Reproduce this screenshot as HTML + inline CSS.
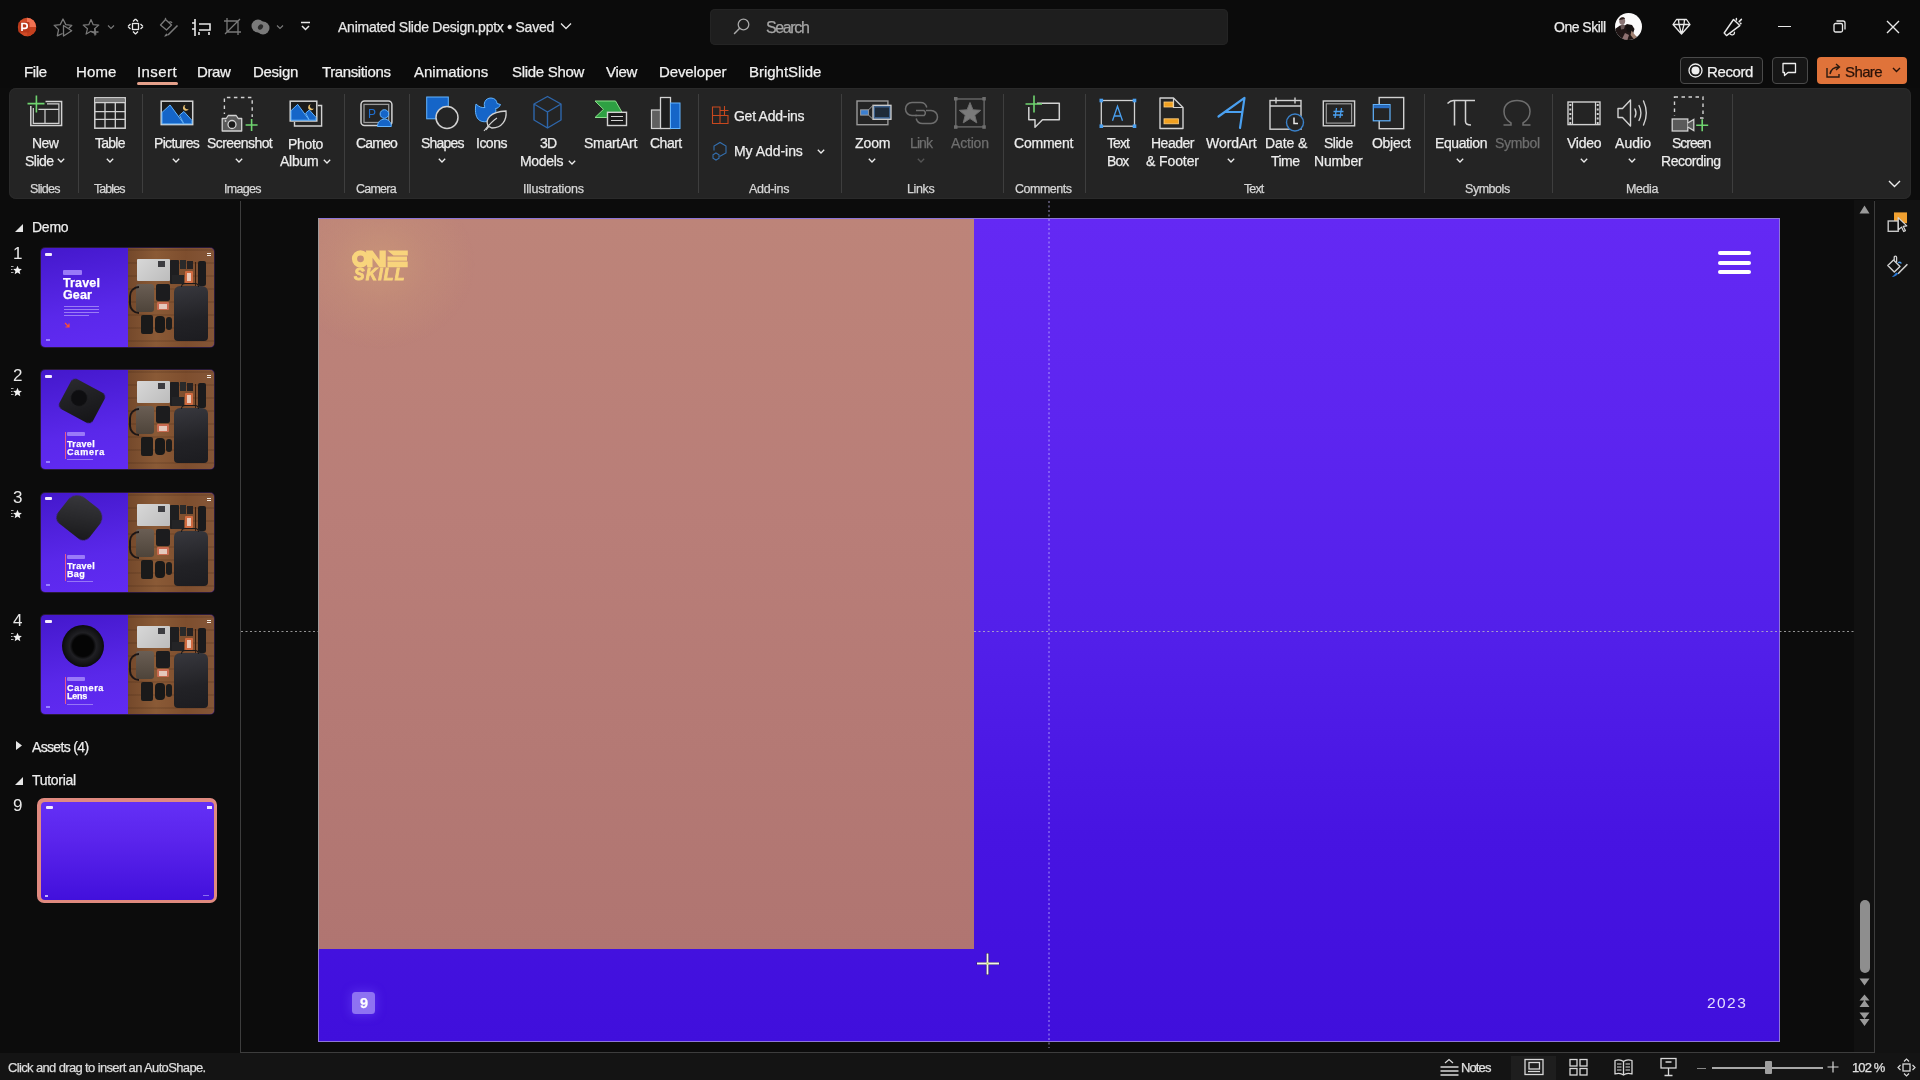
<!DOCTYPE html>
<html><head><meta charset="utf-8"><title>PowerPoint</title>
<style>
html,body{margin:0;padding:0;width:1920px;height:1080px;overflow:hidden;background:#0b0b0b;font-family:"Liberation Sans", sans-serif;}
#root{position:relative;width:1920px;height:1080px;overflow:hidden;}
#root>div{will-change:transform;-webkit-text-stroke:0.25px currentColor}
svg{display:block}
</style></head><body><div id="root">
<div style="position:absolute;left:0px;top:0px;width:1920px;height:88px;background:#0b0b0b"></div>
<div style="position:absolute;left:0px;top:88px;width:1920px;height:965px;background:#0c0c0c"></div>
<div style="position:absolute;left:9px;top:88px;width:1902px;height:111px;background:#242424;border-radius:7px;box-shadow:inset 0 0 0 1px #2a2a2a"></div>
<div style="position:absolute;left:1854px;top:200px;width:20px;height:852px;background:#111111"></div>
<div style="position:absolute;left:1875px;top:200px;width:45px;height:853px;background:#121212"></div>
<div style="position:absolute;left:240px;top:201px;width:1px;height:852px;background:#3d3d3d"></div>
<div style="position:absolute;left:241px;top:1052px;width:1634px;height:1px;background:#3d3d3d"></div>
<div style="position:absolute;left:1874px;top:201px;width:1px;height:852px;background:#3d3d3d"></div>
<div style="position:absolute;left:0px;top:1053px;width:1920px;height:27px;background:#141414"></div>
<svg style="position:absolute;left:16px;top:16px;overflow:visible;" width="22" height="22" viewBox="0 0 22 22" fill="none"><circle cx="11" cy="11" r="9.2" fill="#d04a26"/><path d="M11 1.8a9.2 9.2 0 0 1 9.2 9.2H11z" fill="#f27252"/><path d="M20.2 11a9.2 9.2 0 0 1-9.2 9.2V11z" fill="#c4401e"/><rect x="2.5" y="6" width="11" height="10.5" rx="1" fill="#b8381a"/><path d="M6 15V7.5h2.8a2.4 2.4 0 0 1 0 4.8H6" stroke="#fff" stroke-width="1.7" fill="none"/></svg>
<svg style="position:absolute;left:53px;top:18px;overflow:visible;" width="20" height="19" viewBox="0 0 20 19" fill="none"><path d="M9.5 15.5L4.3 17.8l1.3-6.2L1.2 7.3l6-.7L10 1l2.8 5.6 6 .7-3 3" stroke="#7a7a7a" stroke-width="1.3" stroke-linejoin="round"/><path d="M10.5 7.5v10.5l8.2-5.3z" stroke="#7a7a7a" stroke-width="1.3" stroke-linejoin="round"/></svg>
<svg style="position:absolute;left:82px;top:18px;overflow:visible;" width="18" height="18" viewBox="0 0 18 18" fill="none"><path d="M9 1.5l2.2 5.2 5.6.4-4.3 3.6 1.4 5.4L9 13.2 4.1 16.1l1.4-5.4L1.2 7.1l5.6-.4z" stroke="#7a7a7a" stroke-width="1.2" stroke-linejoin="round"/><path d="M13 10.5v7M9.5 14h7" stroke="#7a7a7a" stroke-width="1.4"/></svg>
<svg style="position:absolute;left:107px;top:24px;overflow:visible;" width="8" height="6" viewBox="0 0 8 6" fill="none"><path d="M1 1.5l3 3 3-3" stroke="#7a7a7a" stroke-width="1.1"/></svg>
<svg style="position:absolute;left:127px;top:18px;overflow:visible;" width="17" height="17" viewBox="0 0 17 17" fill="none"><path d="M8.5 1l-2.5 2.5M8.5 1l2.5 2.5M8.5 16l-2.5-2.5M8.5 16l2.5-2.5M1 8.5l2.5-2.5M1 8.5l2.5 2.5M16 8.5l-2.5-2.5M16 8.5l-2.5 2.5" stroke="#e8e8e8" stroke-width="1.3"/><rect x="5.5" y="5.5" width="6" height="6" stroke="#e8e8e8" stroke-width="1.3"/></svg>
<svg style="position:absolute;left:159px;top:17px;overflow:visible;" width="20" height="20" viewBox="0 0 20 20" fill="none"><path d="M1.5 8l5-5.5 6 5.5-5 5z" stroke="#7a7a7a" stroke-width="1.3" stroke-linejoin="round"/><path d="M6.5 2.5V0.8" stroke="#7a7a7a" stroke-width="1.3"/><path d="M10 5.5c1-1 2.5-.8 3 .5" stroke="#7a7a7a" stroke-width="1.2"/><path d="M18.5 8.5L9 18" stroke="#7a7a7a" stroke-width="1.6"/><path d="M9 18c-1 1-2.5 1.5-4 1.5 1-1 1.5-2.5 2.8-3z" fill="#7a7a7a"/></svg>
<svg style="position:absolute;left:191px;top:18px;overflow:visible;" width="20" height="18" viewBox="0 0 20 18" fill="none"><path d="M4 1v17M1 5h3M1 11h3M8 6h11v6H8M8 14v3M18 14v3" stroke="#e8e8e8" stroke-width="1.6"/></svg>
<svg style="position:absolute;left:223px;top:17px;overflow:visible;" width="19" height="19" viewBox="0 0 19 19" fill="none"><path d="M4 1v14h14M1 4h14v14M2 17L17 2" stroke="#7a7a7a" stroke-width="1.3"/></svg>
<svg style="position:absolute;left:251px;top:18px;overflow:visible;" width="19" height="18" viewBox="0 0 19 18" fill="none"><circle cx="7" cy="8" r="6.5" fill="#7a7a7a"/><circle cx="12" cy="10" r="6.5" fill="#7a7a7a"/><ellipse cx="9.5" cy="9" rx="2.2" ry="3" fill="#2a2a2a" transform="rotate(40 9.5 9)"/></svg>
<svg style="position:absolute;left:276px;top:24px;overflow:visible;" width="8" height="6" viewBox="0 0 8 6" fill="none"><path d="M1 1.5l3 3 3-3" stroke="#7a7a7a" stroke-width="1.1"/></svg>
<svg style="position:absolute;left:300px;top:21px;overflow:visible;" width="11" height="11" viewBox="0 0 11 11" fill="none"><path d="M1 1.5h9M2 5l3.5 3.5L9 5" stroke="#e8e8e8" stroke-width="1.5"/></svg>
<div style="position:absolute;left:338.40px;top:20.05px;font-size:14px;line-height:14px;letter-spacing:-0.246px;color:#e6e6e6;font-weight:400;white-space:nowrap;">Animated Slide Design.pptx • Saved</div>
<svg style="position:absolute;left:560px;top:22px;overflow:visible;" width="12" height="8" viewBox="0 0 12 8" fill="none"><path d="M1 1.5l5 5 5-5" stroke="#e6e6e6" stroke-width="1.3"/></svg>
<div style="position:absolute;left:710px;top:9px;width:518px;height:36px;background:#1e1e1e;border-radius:5px;box-shadow:inset 0 0 0 1px #242424"></div>
<svg style="position:absolute;left:732px;top:17px;overflow:visible;" width="18" height="19" viewBox="0 0 18 19" fill="none"><circle cx="11.5" cy="7.5" r="5.3" stroke="#a8a8a8" stroke-width="1.3"/><path d="M7.7 11.3L2.5 16.5" stroke="#a8a8a8" stroke-width="1.5" stroke-linecap="round"/></svg>
<div style="position:absolute;left:765.60px;top:19.66px;font-size:16px;line-height:16px;letter-spacing:-1.366px;color:#a6a6a6;font-weight:400;white-space:nowrap;">Search</div>
<div style="position:absolute;left:1553.50px;top:20.15px;font-size:14px;line-height:14px;letter-spacing:-0.502px;color:#eaeaea;font-weight:400;white-space:nowrap;">One Skill</div>
<div style="position:absolute;left:1615.4px;top:13.2px;width:27.2px;height:27.2px;border-radius:50%;overflow:hidden;background:#fbfafa"><svg width="28" height="28" viewBox="0 0 28 28" style="position:absolute;left:-0.4px;top:-0.2px"><path d="M0 16l5-3.5 4 .5 3-2 5 1 2.5 4-1.5 5 4 3 2 5H0z" fill="#1e1414"/><path d="M5.5 12c1.5-1 3.5-.8 4.5.5l-1 3.5-3 .5z" fill="#6a5858"/><ellipse cx="7.2" cy="8" rx="3" ry="3.6" fill="#8a7474"/><path d="M4.2 7c.5-3 4.5-3.5 6-1.2-1 0-2 .2-2.8.7z" fill="#2a1e1c"/><path d="M11 12.5l5.5-.5 2 4.5-2 3-4.5-1z" fill="#141010"/><path d="M16.5 17.5l3.5 4.5 2.5 4-3 1-4-5z" fill="#a08070"/><path d="M10 20l4 2-2 6H6z" fill="#8e7070"/></svg></div>
<svg style="position:absolute;left:1672px;top:18px;overflow:visible;" width="19" height="17" viewBox="0 0 19 17" fill="none"><path d="M4.5 1.5h10l3.5 5-8.5 9.5L1 6.5z M1 6.5h17M7 6.5l2.5 9.5 2.5-9.5M6.5 1.5L7 6.5M12.5 1.5L12 6.5" stroke="#e8e8e8" stroke-width="1.3" stroke-linejoin="round"/></svg>
<svg style="position:absolute;left:1720px;top:14px;overflow:visible;" width="24" height="26" viewBox="0 0 24 26" fill="none"><path d="M4.2 19L13.5 5.5L19.8 11.6L6.5 21.6Z" stroke="#e8e8e8" stroke-width="1.4" stroke-linejoin="round"/><path d="M10 19.5a2.3 2.3 0 0 0 4.3-1.8" stroke="#e8e8e8" stroke-width="1.3"/><path d="M16.4 4.6v1.5M19.2 7.6l2.2-2.2" stroke="#e8e8e8" stroke-width="1.5" stroke-linecap="round"/><circle cx="20.7" cy="9.6" r="1" fill="#e8e8e8"/></svg>
<div style="position:absolute;left:1778px;top:26px;width:13px;height:1.4px;background:#e8e8e8"></div>
<svg style="position:absolute;left:1833px;top:20px;overflow:visible;" width="13" height="13" viewBox="0 0 13 13" fill="none"><rect x="1" y="3.5" width="8.5" height="8.5" rx="1.5" stroke="#e8e8e8" stroke-width="1.3"/><path d="M3.5 1h6.5a2 2 0 0 1 2 2v6.5" stroke="#e8e8e8" stroke-width="1.3"/></svg>
<svg style="position:absolute;left:1886px;top:20px;overflow:visible;" width="14" height="14" viewBox="0 0 14 14" fill="none"><path d="M1 1l12 12M13 1L1 13" stroke="#e8e8e8" stroke-width="1.4"/></svg>
<div style="position:absolute;left:24.00px;top:64.30px;font-size:15px;line-height:15px;letter-spacing:-0.367px;color:#f0f0f0;font-weight:400;white-space:nowrap;">File</div>
<div style="position:absolute;left:75.50px;top:64.30px;font-size:15px;line-height:15px;letter-spacing:0.122px;color:#f0f0f0;font-weight:400;white-space:nowrap;">Home</div>
<div style="position:absolute;left:137.30px;top:64.30px;font-size:15px;line-height:15px;letter-spacing:0.414px;color:#f0f0f0;font-weight:400;white-space:nowrap;">Insert</div>
<div style="position:absolute;left:197.30px;top:64.30px;font-size:15px;line-height:15px;letter-spacing:-0.376px;color:#f0f0f0;font-weight:400;white-space:nowrap;">Draw</div>
<div style="position:absolute;left:252.70px;top:64.30px;font-size:15px;line-height:15px;letter-spacing:-0.282px;color:#f0f0f0;font-weight:400;white-space:nowrap;">Design</div>
<div style="position:absolute;left:321.50px;top:64.30px;font-size:15px;line-height:15px;letter-spacing:-0.391px;color:#f0f0f0;font-weight:400;white-space:nowrap;">Transitions</div>
<div style="position:absolute;left:414.00px;top:64.30px;font-size:15px;line-height:15px;letter-spacing:0.010px;color:#f0f0f0;font-weight:400;white-space:nowrap;">Animations</div>
<div style="position:absolute;left:511.70px;top:64.30px;font-size:15px;line-height:15px;letter-spacing:-0.304px;color:#f0f0f0;font-weight:400;white-space:nowrap;">Slide Show</div>
<div style="position:absolute;left:606.00px;top:64.30px;font-size:15px;line-height:15px;letter-spacing:-0.310px;color:#f0f0f0;font-weight:400;white-space:nowrap;">View</div>
<div style="position:absolute;left:659.30px;top:64.30px;font-size:15px;line-height:15px;letter-spacing:-0.108px;color:#f0f0f0;font-weight:400;white-space:nowrap;">Developer</div>
<div style="position:absolute;left:749.30px;top:64.30px;font-size:15px;line-height:15px;letter-spacing:-0.013px;color:#f0f0f0;font-weight:400;white-space:nowrap;">BrightSlide</div>
<div style="position:absolute;left:137px;top:81.5px;width:41px;height:2.5px;background:#e4a08a;border-radius:1.5px"></div>
<div style="position:absolute;left:1680px;top:57px;width:83px;height:27px;border:1px solid #4a4a4a;border-radius:4px;box-sizing:border-box;background:#161616"></div>
<svg style="position:absolute;left:1688px;top:63px;overflow:visible;" width="15" height="15" viewBox="0 0 15 15" fill="none"><circle cx="7.5" cy="7.5" r="6.5" stroke="#eee" stroke-width="1.3"/><circle cx="7.5" cy="7.5" r="4" fill="#eee"/></svg>
<div style="position:absolute;left:1707.00px;top:63.80px;font-size:15px;line-height:15px;letter-spacing:-0.392px;color:#f0f0f0;font-weight:400;white-space:nowrap;">Record</div>
<div style="position:absolute;left:1772px;top:57px;width:36px;height:27px;border:1px solid #4a4a4a;border-radius:4px;box-sizing:border-box;background:#161616"></div>
<svg style="position:absolute;left:1781px;top:62px;overflow:visible;" width="17" height="16" viewBox="0 0 17 16" fill="none"><path d="M2 1.5h12.5v9H7l-3.5 3v-3H2z" stroke="#eee" stroke-width="1.3" stroke-linejoin="round"/></svg>
<div style="position:absolute;left:1817px;top:57px;width:90px;height:27px;background:#e0733a;border-radius:4px"></div>
<svg style="position:absolute;left:1825px;top:62px;overflow:visible;" width="17" height="17" viewBox="0 0 17 17" fill="none"><path d="M2 6v9h12v-3" stroke="#2a1a10" stroke-width="1.4"/><path d="M5 12c1-5 4-7 9-7M11 2l3.5 3-3.5 3" stroke="#2a1a10" stroke-width="1.4"/></svg>
<div style="position:absolute;left:1845.00px;top:63.80px;font-size:15px;line-height:15px;letter-spacing:-0.605px;color:#2a1208;font-weight:400;white-space:nowrap;">Share</div>
<svg style="position:absolute;left:1892px;top:67px;overflow:visible;" width="9" height="6" viewBox="0 0 9 6" fill="none"><path d="M1 1l3.5 3.5L8 1" stroke="#2a1208" stroke-width="1.4"/></svg>
<div style="position:absolute;left:77.7px;top:94px;width:1px;height:99px;background:#3e3e3e"></div>
<div style="position:absolute;left:142px;top:94px;width:1px;height:99px;background:#3e3e3e"></div>
<div style="position:absolute;left:343.7px;top:94px;width:1px;height:99px;background:#3e3e3e"></div>
<div style="position:absolute;left:409.4px;top:94px;width:1px;height:99px;background:#3e3e3e"></div>
<div style="position:absolute;left:697.8px;top:94px;width:1px;height:99px;background:#3e3e3e"></div>
<div style="position:absolute;left:840.6px;top:94px;width:1px;height:99px;background:#3e3e3e"></div>
<div style="position:absolute;left:1002.5px;top:94px;width:1px;height:99px;background:#3e3e3e"></div>
<div style="position:absolute;left:1084.7px;top:94px;width:1px;height:99px;background:#3e3e3e"></div>
<div style="position:absolute;left:1423.6px;top:94px;width:1px;height:99px;background:#3e3e3e"></div>
<div style="position:absolute;left:1551.8px;top:94px;width:1px;height:99px;background:#3e3e3e"></div>
<div style="position:absolute;left:1732px;top:94px;width:1px;height:99px;background:#3e3e3e"></div>
<svg style="position:absolute;left:26px;top:94px;overflow:visible;" width="38" height="34" viewBox="0 0 38 34" fill="none"><path d="M19.5 7.5H35.6V31.6H4.8V12" stroke="#d2d2d2" stroke-width="1.5"/><path d="M21 9.8H32.9V29.4H7.3V14" stroke="#d2d2d2" stroke-width="1.2"/><path d="M12 15.4h20.9M19 15.4v14" stroke="#d2d2d2" stroke-width="1.2"/><path d="M10.4 1.5v17M1.5 9.6h17" stroke="#242424" stroke-width="4"/><path d="M10.4 1.5v17M1.5 9.6h17" stroke="#6fd46f" stroke-width="1.6"/></svg>
<div style="position:absolute;left:32.40px;top:135.85px;font-size:14px;line-height:14px;letter-spacing:-0.602px;color:#ececec;font-weight:400;white-space:nowrap;">New</div>
<div style="position:absolute;left:24.70px;top:153.65px;font-size:14px;line-height:14px;letter-spacing:-0.526px;color:#ececec;font-weight:400;white-space:nowrap;">Slide</div>
<svg style="position:absolute;left:57.2px;top:158.0px;overflow:visible;" width="8" height="5" viewBox="0 0 8 5" fill="none"><path d="M0.8 0.8L4 4 7.2 0.8" stroke="#ececec" stroke-width="1.3"/></svg>
<div style="position:absolute;left:30.30px;top:182.62px;font-size:12.5px;line-height:12.5px;letter-spacing:-0.708px;color:#d6d6d6;font-weight:400;white-space:nowrap;">Slides</div>
<svg style="position:absolute;left:94px;top:97px;overflow:visible;" width="32" height="32" viewBox="0 0 32 32" fill="none"><rect x="0.8" y="0.8" width="30.4" height="30.4" stroke="#d2d2d2" stroke-width="1.5"/><rect x="1.5" y="1.5" width="29" height="4.5" fill="#7a7a7a"/><path d="M0.8 5.6h30.4M0.8 14.6h30.4M0.8 22.4h30.4M11 5.6v25.6M21.3 5.6v25.6" stroke="#d2d2d2" stroke-width="1.3"/></svg>
<div style="position:absolute;left:95.40px;top:135.85px;font-size:14px;line-height:14px;letter-spacing:-0.754px;color:#ececec;font-weight:400;white-space:nowrap;">Table</div>
<svg style="position:absolute;left:106px;top:157.5px;overflow:visible;" width="8" height="5" viewBox="0 0 8 5" fill="none"><path d="M0.8 0.8L4 4 7.2 0.8" stroke="#ececec" stroke-width="1.3"/></svg>
<div style="position:absolute;left:94.30px;top:182.62px;font-size:12.5px;line-height:12.5px;letter-spacing:-0.939px;color:#d6d6d6;font-weight:400;white-space:nowrap;">Tables</div>
<svg style="position:absolute;left:160px;top:100px;overflow:visible;" width="34" height="26" viewBox="0 0 34 26" fill="none"><rect x="1.2" y="1.2" width="31.5" height="23.4" fill="#1b1b1b" stroke="#d2d2d2" stroke-width="1.5"/><path d="M2.0 23.799999999999997V12.431999999999999L10.02 4.944L23.88 23.799999999999997z" fill="#1565c8" stroke="#62b4ff" stroke-width="1"/><path d="M19.47 15.239999999999998L23.88 11.495999999999999L31.900000000000002 20.387999999999998V23.799999999999997H23.88z" fill="#1565c8" stroke="#62b4ff" stroke-width="1"/><path d="M25.77 4.71a3 3 0 1 0 3 4a2.3 2.3 0 0 1-3-4z" fill="#e8c070"/></svg>
<div style="position:absolute;left:153.80px;top:135.85px;font-size:14px;line-height:14px;letter-spacing:-0.672px;color:#ececec;font-weight:400;white-space:nowrap;">Pictures</div>
<svg style="position:absolute;left:172.3px;top:157.5px;overflow:visible;" width="8" height="5" viewBox="0 0 8 5" fill="none"><path d="M0.8 0.8L4 4 7.2 0.8" stroke="#ececec" stroke-width="1.3"/></svg>
<svg style="position:absolute;left:221px;top:96px;overflow:visible;" width="38" height="36" viewBox="0 0 38 36" fill="none"><path d="M3.4 20V1.5H31.2V21" stroke="#d2d2d2" stroke-width="1.4" stroke-dasharray="3.5 3.5"/><rect x="0" y="18" width="23" height="18" fill="#242424"/><path d="M1.2 22.5h4l2-3h8l2 3h3.5v12.5H1.2z" fill="#5a5a5a" stroke="#d2d2d2" stroke-width="1.3" stroke-linejoin="round"/><circle cx="11" cy="28.5" r="4" fill="#1a1a1a" stroke="#d2d2d2" stroke-width="1.3"/><circle cx="4.5" cy="25" r="0.9" fill="#d2d2d2"/><path d="M30.6 23v12M24.6 29h12" stroke="#6fd46f" stroke-width="1.6"/></svg>
<div style="position:absolute;left:207.20px;top:135.85px;font-size:14px;line-height:14px;letter-spacing:-0.562px;color:#ececec;font-weight:400;white-space:nowrap;">Screenshot</div>
<svg style="position:absolute;left:235.3px;top:157.5px;overflow:visible;" width="8" height="5" viewBox="0 0 8 5" fill="none"><path d="M0.8 0.8L4 4 7.2 0.8" stroke="#ececec" stroke-width="1.3"/></svg>
<svg style="position:absolute;left:289px;top:100px;overflow:visible;" width="34" height="27" viewBox="0 0 34 27" fill="none"><path d="M28.8 5.5h3.8v20.5H5.5v-4" stroke="#d2d2d2" stroke-width="1.4"/><rect x="1.2" y="1.2" width="26.6" height="19.8" fill="#1b1b1b" stroke="#d2d2d2" stroke-width="1.5"/><path d="M2.0 20.2V10.703999999999999L8.648000000000001 4.368L20.352 20.2z" fill="#1565c8" stroke="#62b4ff" stroke-width="1"/><path d="M16.628 13.08L20.352 9.911999999999999L27.0 17.436V20.2H20.352z" fill="#1565c8" stroke="#62b4ff" stroke-width="1"/><path d="M21.948 4.17a3 3 0 1 0 3 4a2.3 2.3 0 0 1-3-4z" fill="#e8c070"/></svg>
<div style="position:absolute;left:288.30px;top:136.85px;font-size:14px;line-height:14px;letter-spacing:-0.317px;color:#ececec;font-weight:400;white-space:nowrap;">Photo</div>
<div style="position:absolute;left:280.00px;top:154.15px;font-size:14px;line-height:14px;letter-spacing:-0.277px;color:#ececec;font-weight:400;white-space:nowrap;">Album</div>
<svg style="position:absolute;left:322.5px;top:158.5px;overflow:visible;" width="8" height="5" viewBox="0 0 8 5" fill="none"><path d="M0.8 0.8L4 4 7.2 0.8" stroke="#ececec" stroke-width="1.3"/></svg>
<svg style="position:absolute;left:360px;top:100px;overflow:visible;" width="33" height="27" viewBox="0 0 33 27" fill="none"><rect x="1" y="1" width="30.9" height="24.6" rx="3.5" stroke="#d2d2d2" stroke-width="1.5"/><rect x="4" y="4.4" width="24.7" height="18.1" stroke="#9a9a9a" stroke-width="1.3"/><text x="8" y="18" font-family="Liberation Sans" font-size="12" fill="#1f6fd0">P</text><circle cx="24.4" cy="14" r="4.3" fill="#1565c8" stroke="#62b4ff" stroke-width="1"/><path d="M17.5 26.5c0-4.5 3-7.3 6.9-7.3s6.9 2.8 6.9 7.3z" fill="#1565c8" stroke="#62b4ff" stroke-width="1"/></svg>
<div style="position:absolute;left:355.50px;top:135.85px;font-size:14px;line-height:14px;letter-spacing:-0.806px;color:#ececec;font-weight:400;white-space:nowrap;">Cameo</div>
<div style="position:absolute;left:224.20px;top:182.62px;font-size:12.5px;line-height:12.5px;letter-spacing:-0.699px;color:#d6d6d6;font-weight:400;white-space:nowrap;">Images</div>
<div style="position:absolute;left:356.20px;top:182.62px;font-size:12.5px;line-height:12.5px;letter-spacing:-0.776px;color:#d6d6d6;font-weight:400;white-space:nowrap;">Camera</div>
<svg style="position:absolute;left:425px;top:96px;overflow:visible;" width="36" height="36" viewBox="0 0 36 36" fill="none"><rect x="1.7" y="1" width="21.6" height="21.8" fill="#1565c8" stroke="#62b4ff" stroke-width="1"/><circle cx="22" cy="21.5" r="11" fill="#242424" stroke="#d2d2d2" stroke-width="1.5"/></svg>
<div style="position:absolute;left:420.60px;top:135.85px;font-size:14px;line-height:14px;letter-spacing:-0.797px;color:#ececec;font-weight:400;white-space:nowrap;">Shapes</div>
<svg style="position:absolute;left:438.2px;top:157.5px;overflow:visible;" width="8" height="5" viewBox="0 0 8 5" fill="none"><path d="M0.8 0.8L4 4 7.2 0.8" stroke="#ececec" stroke-width="1.3"/></svg>
<svg style="position:absolute;left:474px;top:95px;overflow:visible;" width="36" height="38" viewBox="0 0 36 38" fill="none"><path d="M2 9c3 3 6 4 9 3.5C9 9 11 3 17 3c4 0 6 3 6 5.5l3.5 1c-1 2.5-3 4-5 4 1 3 0 8-4 11-4 3-10 3-13 0C1 21 1 14 2 9z" fill="#1565c8" stroke="#62b4ff" stroke-width="1"/><path d="M12 35c3-4 6-8 11-12" stroke="#d2d2d2" stroke-width="1.2"/><path d="M14 31c-3-7 2-14 18-15 1 9-4 17-14 17z" fill="#242424" stroke="#d2d2d2" stroke-width="1.3"/><path d="M10 36c4-5 8-10 13-13" stroke="#d2d2d2" stroke-width="1.2"/></svg>
<div style="position:absolute;left:476.20px;top:135.85px;font-size:14px;line-height:14px;letter-spacing:-0.512px;color:#ececec;font-weight:400;white-space:nowrap;">Icons</div>
<svg style="position:absolute;left:532px;top:95px;overflow:visible;" width="31" height="35" viewBox="0 0 31 35" fill="none"><path d="M15.5 1.5L29 9v16l-13.5 8L2 25V9z M2 9l13.5 8L29 9 M15.5 17v16" stroke="#2e66aa" stroke-width="1.4" stroke-linejoin="round"/></svg>
<div style="position:absolute;left:540.10px;top:136.35px;font-size:14px;line-height:14px;letter-spacing:-0.748px;color:#ececec;font-weight:400;white-space:nowrap;">3D</div>
<div style="position:absolute;left:520.00px;top:154.15px;font-size:14px;line-height:14px;letter-spacing:-0.305px;color:#ececec;font-weight:400;white-space:nowrap;">Models</div>
<svg style="position:absolute;left:567.8px;top:159.5px;overflow:visible;" width="8" height="5" viewBox="0 0 8 5" fill="none"><path d="M0.8 0.8L4 4 7.2 0.8" stroke="#ececec" stroke-width="1.3"/></svg>
<svg style="position:absolute;left:593px;top:99px;overflow:visible;" width="35" height="28" viewBox="0 0 35 28" fill="none"><path d="M2 2h20.5L32 18.5H13.5L2 18.5L10.5 10.3z" fill="#2ea043" stroke="#8be08b" stroke-width="1"/><rect x="14.5" y="13.3" width="19" height="13.2" fill="#1b1b1b" stroke="#d2d2d2" stroke-width="1.4"/><path d="M18 17.5h12M18 21.5h12" stroke="#d2d2d2" stroke-width="1.2"/></svg>
<div style="position:absolute;left:584.40px;top:135.85px;font-size:14px;line-height:14px;letter-spacing:-0.278px;color:#ececec;font-weight:400;white-space:nowrap;">SmartArt</div>
<svg style="position:absolute;left:650px;top:96px;overflow:visible;" width="32" height="34" viewBox="0 0 32 34" fill="none"><rect x="1.5" y="14" width="9.5" height="18.5" fill="#606060" stroke="#d2d2d2" stroke-width="1.2"/><rect x="10.5" y="1.5" width="10" height="31" fill="#1e1e1e" stroke="#d2d2d2" stroke-width="1.3"/><rect x="20.5" y="7" width="9.5" height="25.5" fill="#1565c8" stroke="#62b4ff" stroke-width="1"/></svg>
<div style="position:absolute;left:650.30px;top:135.85px;font-size:14px;line-height:14px;letter-spacing:-0.507px;color:#ececec;font-weight:400;white-space:nowrap;">Chart</div>
<div style="position:absolute;left:522.60px;top:182.62px;font-size:12.5px;line-height:12.5px;letter-spacing:-0.194px;color:#d6d6d6;font-weight:400;white-space:nowrap;">Illustrations</div>
<svg style="position:absolute;left:711px;top:105px;overflow:visible;" width="20" height="20" viewBox="0 0 20 20" fill="none"><path d="M1.5 2h7.5v8.5H1.5zM1.5 10.5h7.5v8H1.5zM9 10.5h8v8H9zM9 5.5h4M13.5 1v9M9.5 5.5h8" stroke="#c8481e" stroke-width="1.1"/></svg>
<div style="position:absolute;left:734.00px;top:108.65px;font-size:14px;line-height:14px;letter-spacing:-0.266px;color:#ececec;font-weight:400;white-space:nowrap;">Get Add-ins</div>
<svg style="position:absolute;left:711px;top:141px;overflow:visible;" width="20" height="20" viewBox="0 0 20 20" fill="none"><path d="M8.5 15.5l6.5-3.5V5L9 1.5 3 5v4.5" stroke="#3470b0" stroke-width="1.1"/><path d="M5 12l3 1.8v3.5L5 19l-3-1.7v-3.5z" stroke="#3470b0" stroke-width="1.1"/></svg>
<div style="position:absolute;left:734.00px;top:144.45px;font-size:14px;line-height:14px;letter-spacing:-0.042px;color:#ececec;font-weight:400;white-space:nowrap;">My Add-ins</div>
<svg style="position:absolute;left:817.3px;top:149.0px;overflow:visible;" width="8" height="5" viewBox="0 0 8 5" fill="none"><path d="M0.8 0.8L4 4 7.2 0.8" stroke="#ececec" stroke-width="1.3"/></svg>
<div style="position:absolute;left:748.50px;top:182.62px;font-size:12.5px;line-height:12.5px;letter-spacing:-0.326px;color:#d6d6d6;font-weight:400;white-space:nowrap;">Add-ins</div>
<svg style="position:absolute;left:856px;top:100px;overflow:visible;" width="37" height="26" viewBox="0 0 37 26" fill="none"><rect x="1" y="1" width="30.9" height="23.7" stroke="#9a9a9a" stroke-width="1.4"/><path d="M12 11.5l5-6h17.5v14H17l-5-6" fill="#242424"/><rect x="17" y="5.3" width="18" height="14" fill="#3b5f8a" stroke="#d0d0d0" stroke-width="1.3"/><rect x="19" y="7.5" width="14" height="9.5" fill="#1e2a38"/><rect x="4.6" y="9.8" width="7.8" height="5.3" fill="#3b7fd0" stroke="#9a9a9a" stroke-width="1"/><path d="M12.4 10l4.6-4.6M12.4 15l4.6 4.3" stroke="#9a9a9a" stroke-width="1"/></svg>
<div style="position:absolute;left:855.10px;top:135.85px;font-size:14px;line-height:14px;letter-spacing:-0.097px;color:#ececec;font-weight:400;white-space:nowrap;">Zoom</div>
<svg style="position:absolute;left:868.3px;top:157.5px;overflow:visible;" width="8" height="5" viewBox="0 0 8 5" fill="none"><path d="M0.8 0.8L4 4 7.2 0.8" stroke="#ececec" stroke-width="1.3"/></svg>
<svg style="position:absolute;left:904px;top:100px;overflow:visible;" width="35" height="26" viewBox="0 0 35 26" fill="none"><path d="M13 15.5H8a6.5 6.5 0 0 1 0-13h8.5a6.5 6.5 0 0 1 6.3 5" stroke="#6e6e6e" stroke-width="1.5"/><path d="M22 10.5h5a6.5 6.5 0 0 1 0 13h-8.5a6.5 6.5 0 0 1-6.3-5" stroke="#6e6e6e" stroke-width="1.5"/><path d="M11 15.5h9a3 3 0 0 0 0-5h-8" stroke="#6e6e6e" stroke-width="1.5"/></svg>
<div style="position:absolute;left:910.00px;top:135.85px;font-size:14px;line-height:14px;letter-spacing:-0.896px;color:#6e6e6e;font-weight:400;white-space:nowrap;">Link</div>
<svg style="position:absolute;left:917px;top:157.5px;overflow:visible;" width="8" height="5" viewBox="0 0 8 5" fill="none"><path d="M0.8 0.8L4 4 7.2 0.8" stroke="#555" stroke-width="1.3"/></svg>
<svg style="position:absolute;left:954px;top:97px;overflow:visible;" width="33" height="32" viewBox="0 0 33 32" fill="none"><rect x="1.8" y="2" width="28.3" height="27.9" stroke="#6e6e6e" stroke-width="1.3"/><rect x="0" y="0" width="3.5" height="3.5" fill="#6e6e6e"/><rect x="28.3" y="0" width="3.5" height="3.5" fill="#6e6e6e"/><rect x="0" y="28.3" width="3.5" height="3.5" fill="#6e6e6e"/><rect x="28.3" y="28.3" width="3.5" height="3.5" fill="#6e6e6e"/><path d="M16 5.5l3 7.3 7.8.5-6 5 2 7.6L16 21.6 9.2 25.9l2-7.6-6-5 7.8-.5z" fill="#7a7a7a" stroke="#6e6e6e" stroke-width="1"/></svg>
<div style="position:absolute;left:951.20px;top:135.85px;font-size:14px;line-height:14px;letter-spacing:-0.185px;color:#6e6e6e;font-weight:400;white-space:nowrap;">Action</div>
<div style="position:absolute;left:907.00px;top:182.62px;font-size:12.5px;line-height:12.5px;letter-spacing:-0.376px;color:#d6d6d6;font-weight:400;white-space:nowrap;">Links</div>
<svg style="position:absolute;left:1025px;top:95px;overflow:visible;" width="37" height="34" viewBox="0 0 37 34" fill="none"><path d="M12 8.3h22.3v16.5H17.5l-7.5 7.5v-7.5H3.8V12" stroke="#d2d2d2" stroke-width="1.5" stroke-linejoin="round"/><path d="M9 0.5v17M0.5 9h16.5" stroke="#6fd46f" stroke-width="1.6"/></svg>
<div style="position:absolute;left:1014.00px;top:135.85px;font-size:14px;line-height:14px;letter-spacing:-0.212px;color:#ececec;font-weight:400;white-space:nowrap;">Comment</div>
<div style="position:absolute;left:1014.60px;top:182.62px;font-size:12.5px;line-height:12.5px;letter-spacing:-0.491px;color:#d6d6d6;font-weight:400;white-space:nowrap;">Comments</div>
<svg style="position:absolute;left:1099px;top:98px;overflow:visible;" width="38" height="30" viewBox="0 0 38 30" fill="none"><rect x="2.3" y="2.5" width="33.2" height="25.7" stroke="#d2d2d2" stroke-width="1.3"/><rect x="0.5" y="0.7" width="3.6" height="3.6" fill="#4aa0f0"/><rect x="33.7" y="0.7" width="3.6" height="3.6" fill="#4aa0f0"/><rect x="0.5" y="26.4" width="3.6" height="3.6" fill="#4aa0f0"/><rect x="33.7" y="26.4" width="3.6" height="3.6" fill="#4aa0f0"/><path d="M13.5 22.7l5-14.5 5 14.5M15.2 18h6.6" stroke="#4aa0f0" stroke-width="1.3"/></svg>
<div style="position:absolute;left:1106.50px;top:135.85px;font-size:14px;line-height:14px;letter-spacing:-0.919px;color:#ececec;font-weight:400;white-space:nowrap;">Text</div>
<div style="position:absolute;left:1106.50px;top:153.65px;font-size:14px;line-height:14px;letter-spacing:-0.875px;color:#ececec;font-weight:400;white-space:nowrap;">Box</div>
<svg style="position:absolute;left:1159px;top:97px;overflow:visible;" width="26" height="33" viewBox="0 0 26 33" fill="none"><path d="M1 1h13.5l9.5 9.5V31.5H1z" stroke="#d2d2d2" stroke-width="1.4" stroke-linejoin="round"/><path d="M14.5 1v9.5H24" stroke="#d2d2d2" stroke-width="1.2"/><rect x="5" y="5" width="9" height="5" fill="#f0a020" stroke="#ffd080" stroke-width="0.8"/><rect x="5" y="21.8" width="14.5" height="5" fill="#f0a020" stroke="#ffd080" stroke-width="0.8"/></svg>
<div style="position:absolute;left:1150.60px;top:135.85px;font-size:14px;line-height:14px;letter-spacing:-0.503px;color:#ececec;font-weight:400;white-space:nowrap;">Header</div>
<div style="position:absolute;left:1145.70px;top:153.65px;font-size:14px;line-height:14px;letter-spacing:-0.099px;color:#ececec;font-weight:400;white-space:nowrap;">&amp; Footer</div>
<svg style="position:absolute;left:1217px;top:96px;overflow:visible;" width="30" height="34" viewBox="0 0 30 34" fill="none"><path d="M1.5 20.5L27.5 1.8 23 32M8 16h17" stroke="#4aa0f0" stroke-width="2.2" stroke-linejoin="round" stroke-linecap="round"/></svg>
<div style="position:absolute;left:1206.20px;top:135.85px;font-size:14px;line-height:14px;letter-spacing:-0.055px;color:#ececec;font-weight:400;white-space:nowrap;">WordArt</div>
<svg style="position:absolute;left:1227.2px;top:157.5px;overflow:visible;" width="8" height="5" viewBox="0 0 8 5" fill="none"><path d="M0.8 0.8L4 4 7.2 0.8" stroke="#ececec" stroke-width="1.3"/></svg>
<svg style="position:absolute;left:1269px;top:96px;overflow:visible;" width="38" height="36" viewBox="0 0 38 36" fill="none"><rect x="1" y="4.5" width="31" height="28.7" stroke="#d2d2d2" stroke-width="1.4"/><path d="M1 10h31M7 1.5v6M26 1.5v6" stroke="#d2d2d2" stroke-width="1.4"/><circle cx="26" cy="26.5" r="8.5" fill="#242424" stroke="#3a80c8" stroke-width="1.4"/><path d="M25 21.5v6h4" stroke="#e8e8e8" stroke-width="1.5"/></svg>
<div style="position:absolute;left:1264.50px;top:135.85px;font-size:14px;line-height:14px;letter-spacing:-0.083px;color:#ececec;font-weight:400;white-space:nowrap;">Date &amp;</div>
<div style="position:absolute;left:1271.40px;top:153.65px;font-size:14px;line-height:14px;letter-spacing:-0.548px;color:#ececec;font-weight:400;white-space:nowrap;">Time</div>
<svg style="position:absolute;left:1322px;top:100px;overflow:visible;" width="34" height="27" viewBox="0 0 34 27" fill="none"><rect x="1.3" y="1" width="31.3" height="24.8" stroke="#d2d2d2" stroke-width="1.4"/><rect x="4.3" y="3.8" width="25.3" height="19.3" stroke="#9a9a9a" stroke-width="1.2"/><path d="M14.5 8l-1.5 10M19.5 8L18 18M11.5 11.5h10M11 15h10" stroke="#4aa0f0" stroke-width="1.3"/></svg>
<div style="position:absolute;left:1324.30px;top:135.85px;font-size:14px;line-height:14px;letter-spacing:-0.486px;color:#ececec;font-weight:400;white-space:nowrap;">Slide</div>
<div style="position:absolute;left:1314.30px;top:153.65px;font-size:14px;line-height:14px;letter-spacing:-0.232px;color:#ececec;font-weight:400;white-space:nowrap;">Number</div>
<svg style="position:absolute;left:1372px;top:96px;overflow:visible;" width="33" height="34" viewBox="0 0 33 34" fill="none"><rect x="7.2" y="1.5" width="24.5" height="31.2" stroke="#d2d2d2" stroke-width="1.4"/><rect x="1.3" y="8.6" width="16.7" height="16.2" fill="#242424" stroke="#62b4ff" stroke-width="1.2"/><rect x="1.8" y="9.2" width="15.7" height="3" fill="#2a70c8"/></svg>
<div style="position:absolute;left:1371.70px;top:135.85px;font-size:14px;line-height:14px;letter-spacing:-0.294px;color:#ececec;font-weight:400;white-space:nowrap;">Object</div>
<div style="position:absolute;left:1244.20px;top:182.62px;font-size:12.5px;line-height:12.5px;letter-spacing:-0.881px;color:#d6d6d6;font-weight:400;white-space:nowrap;">Text</div>
<svg style="position:absolute;left:1446px;top:99px;overflow:visible;" width="30" height="28" viewBox="0 0 30 28" fill="none"><path d="M1.5 4.5c2-2 4-3 6-3h21.5M8.5 1.5v25M19.5 1.5v21c0 2.5 1.5 3.5 5.5 3.5" stroke="#d2d2d2" stroke-width="1.5"/></svg>
<div style="position:absolute;left:1435.20px;top:135.85px;font-size:14px;line-height:14px;letter-spacing:-0.396px;color:#ececec;font-weight:400;white-space:nowrap;">Equation</div>
<svg style="position:absolute;left:1456.2px;top:157.5px;overflow:visible;" width="8" height="5" viewBox="0 0 8 5" fill="none"><path d="M0.8 0.8L4 4 7.2 0.8" stroke="#ececec" stroke-width="1.3"/></svg>
<svg style="position:absolute;left:1502px;top:99px;overflow:visible;" width="30" height="28" viewBox="0 0 30 28" fill="none"><path d="M1.5 26h7.5v-2C4 21 2 17 2 12.5 2 5.5 7.5 1.5 15 1.5s13 4 13 11c0 4.5-2 8.5-7 11.5v2h7.5" stroke="#6e6e6e" stroke-width="1.5"/></svg>
<div style="position:absolute;left:1494.90px;top:135.85px;font-size:14px;line-height:14px;letter-spacing:-0.330px;color:#6e6e6e;font-weight:400;white-space:nowrap;">Symbol</div>
<div style="position:absolute;left:1464.50px;top:182.62px;font-size:12.5px;line-height:12.5px;letter-spacing:-0.462px;color:#d6d6d6;font-weight:400;white-space:nowrap;">Symbols</div>
<svg style="position:absolute;left:1567px;top:101px;overflow:visible;" width="34" height="25" viewBox="0 0 34 25" fill="none"><rect x="1" y="1" width="32" height="22.6" stroke="#d2d2d2" stroke-width="1.4"/><path d="M5.5 1v22.6M28.5 1v22.6" stroke="#d2d2d2" stroke-width="1.2"/><rect x="2.3" y="3.0" width="2" height="2" fill="#d2d2d2"/><rect x="29.7" y="3.0" width="2" height="2" fill="#d2d2d2"/><rect x="2.3" y="7.5" width="2" height="2" fill="#d2d2d2"/><rect x="29.7" y="7.5" width="2" height="2" fill="#d2d2d2"/><rect x="2.3" y="12.0" width="2" height="2" fill="#d2d2d2"/><rect x="29.7" y="12.0" width="2" height="2" fill="#d2d2d2"/><rect x="2.3" y="16.5" width="2" height="2" fill="#d2d2d2"/><rect x="29.7" y="16.5" width="2" height="2" fill="#d2d2d2"/><rect x="2.3" y="21.0" width="2" height="2" fill="#d2d2d2"/><rect x="29.7" y="21.0" width="2" height="2" fill="#d2d2d2"/></svg>
<div style="position:absolute;left:1566.70px;top:135.85px;font-size:14px;line-height:14px;letter-spacing:-0.231px;color:#ececec;font-weight:400;white-space:nowrap;">Video</div>
<svg style="position:absolute;left:1579.5px;top:157.5px;overflow:visible;" width="8" height="5" viewBox="0 0 8 5" fill="none"><path d="M0.8 0.8L4 4 7.2 0.8" stroke="#ececec" stroke-width="1.3"/></svg>
<svg style="position:absolute;left:1617px;top:98px;overflow:visible;" width="32" height="30" viewBox="0 0 32 30" fill="none"><path d="M1 10.5h4.5L13.5 2v26l-8-8.5H1z" stroke="#d2d2d2" stroke-width="1.4" stroke-linejoin="round"/><path d="M18 11c1.2 2.5 1.2 5.5 0 8M22 7.5c2.3 4.5 2.3 10.5 0 15M26.5 3c3.5 7.5 3.5 16.5 0 24" stroke="#d2d2d2" stroke-width="1.4" stroke-linecap="round"/></svg>
<div style="position:absolute;left:1614.60px;top:135.85px;font-size:14px;line-height:14px;letter-spacing:0.059px;color:#ececec;font-weight:400;white-space:nowrap;">Audio</div>
<svg style="position:absolute;left:1628.2px;top:157.5px;overflow:visible;" width="8" height="5" viewBox="0 0 8 5" fill="none"><path d="M0.8 0.8L4 4 7.2 0.8" stroke="#ececec" stroke-width="1.3"/></svg>
<svg style="position:absolute;left:1671px;top:96px;overflow:visible;" width="38" height="36" viewBox="0 0 38 36" fill="none"><rect x="3.5" y="1" width="28.5" height="21" stroke="#d2d2d2" stroke-width="1.4" stroke-dasharray="3.5 3.5"/><rect x="0" y="20" width="26" height="16" fill="#242424"/><rect x="1.2" y="23" width="15.6" height="12" fill="#5a5a5a" stroke="#d2d2d2" stroke-width="1.3"/><path d="M16.8 27l6-3.5v11l-6-3.5" fill="#5a5a5a" stroke="#d2d2d2" stroke-width="1.3"/><path d="M31.2 23.2v12M25.2 29.2h12" stroke="#6fd46f" stroke-width="1.6"/></svg>
<div style="position:absolute;left:1671.50px;top:135.85px;font-size:14px;line-height:14px;letter-spacing:-1.010px;color:#ececec;font-weight:400;white-space:nowrap;">Screen</div>
<div style="position:absolute;left:1660.70px;top:153.65px;font-size:14px;line-height:14px;letter-spacing:-0.468px;color:#ececec;font-weight:400;white-space:nowrap;">Recording</div>
<div style="position:absolute;left:1625.50px;top:182.62px;font-size:12.5px;line-height:12.5px;letter-spacing:-0.409px;color:#d6d6d6;font-weight:400;white-space:nowrap;">Media</div>
<svg style="position:absolute;left:1888px;top:180px;overflow:visible;" width="13" height="8" viewBox="0 0 13 8" fill="none"><path d="M1 1l5.5 5.5L12 1" stroke="#ececec" stroke-width="1.4"/></svg>
<svg style="position:absolute;left:13.5px;top:222.5px;overflow:visible;" width="10" height="10" viewBox="0 0 10 10" fill="none"><path d="M9 1v8H1z" fill="#e6e6e6"/></svg>
<div style="position:absolute;left:31.60px;top:220.15px;font-size:14px;line-height:14px;letter-spacing:-0.236px;color:#ececec;font-weight:400;white-space:nowrap;">Demo</div>
<svg style="position:absolute;left:15px;top:740px;overflow:visible;" width="8" height="11" viewBox="0 0 8 11" fill="none"><path d="M1 1l6 4.5-6 4.5z" fill="#e6e6e6"/></svg>
<div style="position:absolute;left:31.60px;top:739.65px;font-size:14px;line-height:14px;letter-spacing:-0.661px;color:#ececec;font-weight:400;white-space:nowrap;">Assets (4)</div>
<svg style="position:absolute;left:13.5px;top:775.5px;overflow:visible;" width="10" height="10" viewBox="0 0 10 10" fill="none"><path d="M9 1v8H1z" fill="#e6e6e6"/></svg>
<div style="position:absolute;left:31.70px;top:773.15px;font-size:14px;line-height:14px;letter-spacing:-0.283px;color:#ececec;font-weight:400;white-space:nowrap;">Tutorial</div>
<div style="position:absolute;left:12.77px;top:244.81px;font-size:17px;line-height:17px;letter-spacing:0.000px;color:#e8e8e8;font-weight:400;white-space:nowrap;-webkit-text-stroke:0">1</div>
<svg style="position:absolute;left:10px;top:264.7px;overflow:visible;" width="13" height="10" viewBox="0 0 13 10" fill="none"><path d="M7.5 0.8l1.3 2.9 3.1.3-2.3 2.1.7 3.1-2.8-1.6-2.8 1.6.7-3.1L3.1 4l3.1-.3z" fill="#f2f2f2"/><path d="M1 1.5h2.5M1 4.5h1.5M1 7.5h2.5" stroke="#aaa" stroke-width="1.1"/></svg>
<div style="position:absolute;left:40.5px;top:248.2px;width:173px;height:99px;border-radius:4px;background:linear-gradient(170deg,#4418cc,#5a28ea 55%,#642cf6);box-shadow:0 0 0 1px #2a1a3a"></div>
<div style="position:absolute;left:127.5px;top:248.2px;width:86px;height:99px;overflow:hidden;border-radius:0 4px 4px 0"><div style="position:absolute;left:0;top:0;width:86px;height:99px;filter:blur(0.6px)"><div style="position:absolute;left:-7px;top:-5px;width:100px;height:110px;background:linear-gradient(90deg,#6e4428,#8a5a36 35%,#7e4e2e 65%,#86583a)"></div><div style="position:absolute;left:-7px;top:-5px;width:100px;height:110px;background:repeating-linear-gradient(0deg,rgba(0,0,0,0) 0,rgba(0,0,0,0) 11px,rgba(40,20,8,.25) 12px,rgba(0,0,0,0) 13px)"></div><div style="position:absolute;left:9.299999999999997px;top:10.6px;width:32.3px;height:22.5px;background:linear-gradient(135deg,#d8d8d8,#bcbcbc);border-radius:1px"></div><div style="position:absolute;left:30.299999999999997px;top:12.5px;width:7.2px;height:6.9px;background:#3c3c40"></div><div style="position:absolute;left:42px;top:12px;width:9px;height:24px;background:#1e1e20;border-radius:1px"></div><div style="position:absolute;left:52px;top:12px;width:6px;height:9px;background:#2a2a2a"></div><div style="position:absolute;left:59px;top:13px;width:6px;height:8px;background:#262222"></div><div style="position:absolute;left:66.5px;top:14px;width:1.5px;height:24px;background:#3a1e0e"></div><div style="position:absolute;left:69.5px;top:12.5px;width:8.5px;height:25.5px;background:#1a1a1c;border-radius:2px"></div><div style="position:absolute;left:56.80000000000001px;top:23.3px;width:8.2px;height:11.7px;background:#d06a40;border-radius:1px"></div><div style="position:absolute;left:58.5px;top:25px;width:4.8px;height:8px;background:#e8c8b8"></div><div style="position:absolute;left:44px;top:27px;width:12px;height:9px;background:#242426"></div><div style="position:absolute;left:8.299999999999997px;top:35.6px;width:17.7px;height:28.9px;background:linear-gradient(180deg,#6a5e54,#4e443a);border-radius:3px"></div><div style="position:absolute;left:0.5px;top:38px;width:10px;height:28px;border:2px solid #1c1616;border-right:none;border-radius:10px 0 0 10px;box-sizing:border-box"></div><div style="position:absolute;left:28px;top:36px;width:13.6px;height:16.7px;background:#1c1c1e;border-radius:2px"></div><div style="position:absolute;left:29px;top:53.7px;width:12px;height:8.8px;background:#c86a50;border-radius:1px"></div><div style="position:absolute;left:31px;top:55.5px;width:8px;height:5px;background:#e4c8bc"></div><div style="position:absolute;left:45.5px;top:38px;width:34.8px;height:55px;background:linear-gradient(170deg,#38383e,#222226 60%,#1c1c20);border-radius:6px 6px 4px 4px"></div><div style="position:absolute;left:53px;top:35px;width:18px;height:4px;border:1.5px solid #1a1a1c;border-bottom:none;border-radius:8px 8px 0 0;box-sizing:border-box"></div><div style="position:absolute;left:13px;top:67.4px;width:11.5px;height:18.6px;background:#1a1a1a;border-radius:2px"></div><div style="position:absolute;left:27px;top:68px;width:9.7px;height:17px;background:#181818;border-radius:4px"></div><div style="position:absolute;left:37.7px;top:69px;width:6.8px;height:13px;background:#1c1c1c;border-radius:3px"></div></div><div style="position:absolute;left:79px;top:4.5px;width:4px;height:1px;background:#f0e8e0;box-shadow:0 2px 0 #f0e8e0"></div></div>
<div style="position:absolute;left:44.5px;top:252.7px;width:7px;height:3px;background:#f4ecff;border-radius:1px"></div>
<div style="position:absolute;left:45.5px;top:339.2px;width:4px;height:2px;background:#9a80ff"></div>
<div style="position:absolute;left:63.0px;top:269.5px;width:18.5px;height:5px;background:#9a7af8;border-radius:1px"></div>
<div style="position:absolute;left:63.00px;top:277.42px;font-size:12.5px;line-height:12.5px;letter-spacing:0.144px;color:#fff;font-weight:700;white-space:nowrap;">Travel</div>
<div style="position:absolute;left:63.00px;top:288.92px;font-size:12.5px;line-height:12.5px;letter-spacing:0.127px;color:#fff;font-weight:700;white-space:nowrap;">Gear</div>
<div style="position:absolute;left:63.5px;top:306.2px;width:35px;height:1px;background:rgba(220,210,255,.5)"></div>
<div style="position:absolute;left:63.5px;top:309.2px;width:35px;height:1px;background:rgba(220,210,255,.5)"></div>
<div style="position:absolute;left:63.5px;top:312.2px;width:35px;height:1px;background:rgba(220,210,255,.5)"></div>
<div style="position:absolute;left:63.5px;top:315.2px;width:25px;height:1px;background:rgba(220,210,255,.5)"></div>
<svg style="position:absolute;left:64.0px;top:321.7px;overflow:visible;" width="6" height="6" viewBox="0 0 6 6" fill="none"><path d="M1 1l4 4M5 1.5v3.5H1.5" stroke="#ff5030" stroke-width="1.2"/></svg>
<div style="position:absolute;left:12.77px;top:367.01px;font-size:17px;line-height:17px;letter-spacing:0.000px;color:#e8e8e8;font-weight:400;white-space:nowrap;-webkit-text-stroke:0">2</div>
<svg style="position:absolute;left:10px;top:386.9px;overflow:visible;" width="13" height="10" viewBox="0 0 13 10" fill="none"><path d="M7.5 0.8l1.3 2.9 3.1.3-2.3 2.1.7 3.1-2.8-1.6-2.8 1.6.7-3.1L3.1 4l3.1-.3z" fill="#f2f2f2"/><path d="M1 1.5h2.5M1 4.5h1.5M1 7.5h2.5" stroke="#aaa" stroke-width="1.1"/></svg>
<div style="position:absolute;left:40.5px;top:370.4px;width:173px;height:99px;border-radius:4px;background:linear-gradient(170deg,#4418cc,#5a28ea 55%,#642cf6);box-shadow:0 0 0 1px #2a1a3a"></div>
<div style="position:absolute;left:127.5px;top:370.4px;width:86px;height:99px;overflow:hidden;border-radius:0 4px 4px 0"><div style="position:absolute;left:0;top:0;width:86px;height:99px;filter:blur(0.6px)"><div style="position:absolute;left:-7px;top:-5px;width:100px;height:110px;background:linear-gradient(90deg,#6e4428,#8a5a36 35%,#7e4e2e 65%,#86583a)"></div><div style="position:absolute;left:-7px;top:-5px;width:100px;height:110px;background:repeating-linear-gradient(0deg,rgba(0,0,0,0) 0,rgba(0,0,0,0) 11px,rgba(40,20,8,.25) 12px,rgba(0,0,0,0) 13px)"></div><div style="position:absolute;left:9.299999999999997px;top:10.6px;width:32.3px;height:22.5px;background:linear-gradient(135deg,#d8d8d8,#bcbcbc);border-radius:1px"></div><div style="position:absolute;left:30.299999999999997px;top:12.5px;width:7.2px;height:6.9px;background:#3c3c40"></div><div style="position:absolute;left:42px;top:12px;width:9px;height:24px;background:#1e1e20;border-radius:1px"></div><div style="position:absolute;left:52px;top:12px;width:6px;height:9px;background:#2a2a2a"></div><div style="position:absolute;left:59px;top:13px;width:6px;height:8px;background:#262222"></div><div style="position:absolute;left:66.5px;top:14px;width:1.5px;height:24px;background:#3a1e0e"></div><div style="position:absolute;left:69.5px;top:12.5px;width:8.5px;height:25.5px;background:#1a1a1c;border-radius:2px"></div><div style="position:absolute;left:56.80000000000001px;top:23.3px;width:8.2px;height:11.7px;background:#d06a40;border-radius:1px"></div><div style="position:absolute;left:58.5px;top:25px;width:4.8px;height:8px;background:#e8c8b8"></div><div style="position:absolute;left:44px;top:27px;width:12px;height:9px;background:#242426"></div><div style="position:absolute;left:8.299999999999997px;top:35.6px;width:17.7px;height:28.9px;background:linear-gradient(180deg,#6a5e54,#4e443a);border-radius:3px"></div><div style="position:absolute;left:0.5px;top:38px;width:10px;height:28px;border:2px solid #1c1616;border-right:none;border-radius:10px 0 0 10px;box-sizing:border-box"></div><div style="position:absolute;left:28px;top:36px;width:13.6px;height:16.7px;background:#1c1c1e;border-radius:2px"></div><div style="position:absolute;left:29px;top:53.7px;width:12px;height:8.8px;background:#c86a50;border-radius:1px"></div><div style="position:absolute;left:31px;top:55.5px;width:8px;height:5px;background:#e4c8bc"></div><div style="position:absolute;left:45.5px;top:38px;width:34.8px;height:55px;background:linear-gradient(170deg,#38383e,#222226 60%,#1c1c20);border-radius:6px 6px 4px 4px"></div><div style="position:absolute;left:53px;top:35px;width:18px;height:4px;border:1.5px solid #1a1a1c;border-bottom:none;border-radius:8px 8px 0 0;box-sizing:border-box"></div><div style="position:absolute;left:13px;top:67.4px;width:11.5px;height:18.6px;background:#1a1a1a;border-radius:2px"></div><div style="position:absolute;left:27px;top:68px;width:9.7px;height:17px;background:#181818;border-radius:4px"></div><div style="position:absolute;left:37.7px;top:69px;width:6.8px;height:13px;background:#1c1c1c;border-radius:3px"></div></div><div style="position:absolute;left:79px;top:4.5px;width:4px;height:1px;background:#f0e8e0;box-shadow:0 2px 0 #f0e8e0"></div></div>
<div style="position:absolute;left:44.5px;top:374.9px;width:7px;height:3px;background:#f4ecff;border-radius:1px"></div>
<div style="position:absolute;left:45.5px;top:461.4px;width:4px;height:2px;background:#9a80ff"></div>
<div style="position:absolute;left:62.5px;top:384.4px;width:38px;height:34px;background:linear-gradient(135deg,#2a2a2e,#141416);border-radius:5px;transform:rotate(28deg)"></div>
<div style="position:absolute;left:70.5px;top:390.4px;width:16px;height:16px;background:#0e0e10;border-radius:50%;transform:rotate(28deg)"></div>
<div style="position:absolute;left:64.5px;top:432.0px;width:1px;height:27.4px;background:#e85a8a"></div>
<div style="position:absolute;left:66.5px;top:432.4px;width:18px;height:4px;background:#9a7af8;border-radius:1px"></div>
<div style="position:absolute;left:66.80px;top:439.78px;font-size:9px;line-height:9px;letter-spacing:0.330px;color:#fff;font-weight:700;white-space:nowrap;">Travel</div>
<div style="position:absolute;left:66.80px;top:447.58px;font-size:9px;line-height:9px;letter-spacing:0.830px;color:#fff;font-weight:700;white-space:nowrap;">Camera</div>
<div style="position:absolute;left:66.5px;top:458.9px;width:26px;height:1px;background:rgba(220,210,255,.45)"></div>
<div style="position:absolute;left:12.77px;top:489.41px;font-size:17px;line-height:17px;letter-spacing:0.000px;color:#e8e8e8;font-weight:400;white-space:nowrap;-webkit-text-stroke:0">3</div>
<svg style="position:absolute;left:10px;top:509.3px;overflow:visible;" width="13" height="10" viewBox="0 0 13 10" fill="none"><path d="M7.5 0.8l1.3 2.9 3.1.3-2.3 2.1.7 3.1-2.8-1.6-2.8 1.6.7-3.1L3.1 4l3.1-.3z" fill="#f2f2f2"/><path d="M1 1.5h2.5M1 4.5h1.5M1 7.5h2.5" stroke="#aaa" stroke-width="1.1"/></svg>
<div style="position:absolute;left:40.5px;top:492.8px;width:173px;height:99px;border-radius:4px;background:linear-gradient(170deg,#4418cc,#5a28ea 55%,#642cf6);box-shadow:0 0 0 1px #2a1a3a"></div>
<div style="position:absolute;left:127.5px;top:492.8px;width:86px;height:99px;overflow:hidden;border-radius:0 4px 4px 0"><div style="position:absolute;left:0;top:0;width:86px;height:99px;filter:blur(0.6px)"><div style="position:absolute;left:-7px;top:-5px;width:100px;height:110px;background:linear-gradient(90deg,#6e4428,#8a5a36 35%,#7e4e2e 65%,#86583a)"></div><div style="position:absolute;left:-7px;top:-5px;width:100px;height:110px;background:repeating-linear-gradient(0deg,rgba(0,0,0,0) 0,rgba(0,0,0,0) 11px,rgba(40,20,8,.25) 12px,rgba(0,0,0,0) 13px)"></div><div style="position:absolute;left:9.299999999999997px;top:10.6px;width:32.3px;height:22.5px;background:linear-gradient(135deg,#d8d8d8,#bcbcbc);border-radius:1px"></div><div style="position:absolute;left:30.299999999999997px;top:12.5px;width:7.2px;height:6.9px;background:#3c3c40"></div><div style="position:absolute;left:42px;top:12px;width:9px;height:24px;background:#1e1e20;border-radius:1px"></div><div style="position:absolute;left:52px;top:12px;width:6px;height:9px;background:#2a2a2a"></div><div style="position:absolute;left:59px;top:13px;width:6px;height:8px;background:#262222"></div><div style="position:absolute;left:66.5px;top:14px;width:1.5px;height:24px;background:#3a1e0e"></div><div style="position:absolute;left:69.5px;top:12.5px;width:8.5px;height:25.5px;background:#1a1a1c;border-radius:2px"></div><div style="position:absolute;left:56.80000000000001px;top:23.3px;width:8.2px;height:11.7px;background:#d06a40;border-radius:1px"></div><div style="position:absolute;left:58.5px;top:25px;width:4.8px;height:8px;background:#e8c8b8"></div><div style="position:absolute;left:44px;top:27px;width:12px;height:9px;background:#242426"></div><div style="position:absolute;left:8.299999999999997px;top:35.6px;width:17.7px;height:28.9px;background:linear-gradient(180deg,#6a5e54,#4e443a);border-radius:3px"></div><div style="position:absolute;left:0.5px;top:38px;width:10px;height:28px;border:2px solid #1c1616;border-right:none;border-radius:10px 0 0 10px;box-sizing:border-box"></div><div style="position:absolute;left:28px;top:36px;width:13.6px;height:16.7px;background:#1c1c1e;border-radius:2px"></div><div style="position:absolute;left:29px;top:53.7px;width:12px;height:8.8px;background:#c86a50;border-radius:1px"></div><div style="position:absolute;left:31px;top:55.5px;width:8px;height:5px;background:#e4c8bc"></div><div style="position:absolute;left:45.5px;top:38px;width:34.8px;height:55px;background:linear-gradient(170deg,#38383e,#222226 60%,#1c1c20);border-radius:6px 6px 4px 4px"></div><div style="position:absolute;left:53px;top:35px;width:18px;height:4px;border:1.5px solid #1a1a1c;border-bottom:none;border-radius:8px 8px 0 0;box-sizing:border-box"></div><div style="position:absolute;left:13px;top:67.4px;width:11.5px;height:18.6px;background:#1a1a1a;border-radius:2px"></div><div style="position:absolute;left:27px;top:68px;width:9.7px;height:17px;background:#181818;border-radius:4px"></div><div style="position:absolute;left:37.7px;top:69px;width:6.8px;height:13px;background:#1c1c1c;border-radius:3px"></div></div><div style="position:absolute;left:79px;top:4.5px;width:4px;height:1px;background:#f0e8e0;box-shadow:0 2px 0 #f0e8e0"></div></div>
<div style="position:absolute;left:44.5px;top:497.3px;width:7px;height:3px;background:#f4ecff;border-radius:1px"></div>
<div style="position:absolute;left:45.5px;top:583.8px;width:4px;height:2px;background:#9a80ff"></div>
<div style="position:absolute;left:59.5px;top:498.8px;width:40px;height:36px;background:linear-gradient(150deg,#3a3a3e,#18181a);border-radius:12px 12px 8px 8px;transform:rotate(38deg)"></div>
<div style="position:absolute;left:64.5px;top:554.4px;width:1px;height:27.4px;background:#e85a8a"></div>
<div style="position:absolute;left:66.5px;top:554.8px;width:18px;height:4px;background:#9a7af8;border-radius:1px"></div>
<div style="position:absolute;left:66.80px;top:562.18px;font-size:9px;line-height:9px;letter-spacing:0.330px;color:#fff;font-weight:700;white-space:nowrap;">Travel</div>
<div style="position:absolute;left:66.80px;top:569.98px;font-size:9px;line-height:9px;letter-spacing:0.333px;color:#fff;font-weight:700;white-space:nowrap;">Bag</div>
<div style="position:absolute;left:66.5px;top:581.3px;width:26px;height:1px;background:rgba(220,210,255,.45)"></div>
<div style="position:absolute;left:12.77px;top:611.71px;font-size:17px;line-height:17px;letter-spacing:0.000px;color:#e8e8e8;font-weight:400;white-space:nowrap;-webkit-text-stroke:0">4</div>
<svg style="position:absolute;left:10px;top:631.6px;overflow:visible;" width="13" height="10" viewBox="0 0 13 10" fill="none"><path d="M7.5 0.8l1.3 2.9 3.1.3-2.3 2.1.7 3.1-2.8-1.6-2.8 1.6.7-3.1L3.1 4l3.1-.3z" fill="#f2f2f2"/><path d="M1 1.5h2.5M1 4.5h1.5M1 7.5h2.5" stroke="#aaa" stroke-width="1.1"/></svg>
<div style="position:absolute;left:40.5px;top:615.1px;width:173px;height:99px;border-radius:4px;background:linear-gradient(170deg,#4418cc,#5a28ea 55%,#642cf6);box-shadow:0 0 0 1px #2a1a3a"></div>
<div style="position:absolute;left:127.5px;top:615.1px;width:86px;height:99px;overflow:hidden;border-radius:0 4px 4px 0"><div style="position:absolute;left:0;top:0;width:86px;height:99px;filter:blur(0.6px)"><div style="position:absolute;left:-7px;top:-5px;width:100px;height:110px;background:linear-gradient(90deg,#6e4428,#8a5a36 35%,#7e4e2e 65%,#86583a)"></div><div style="position:absolute;left:-7px;top:-5px;width:100px;height:110px;background:repeating-linear-gradient(0deg,rgba(0,0,0,0) 0,rgba(0,0,0,0) 11px,rgba(40,20,8,.25) 12px,rgba(0,0,0,0) 13px)"></div><div style="position:absolute;left:9.299999999999997px;top:10.6px;width:32.3px;height:22.5px;background:linear-gradient(135deg,#d8d8d8,#bcbcbc);border-radius:1px"></div><div style="position:absolute;left:30.299999999999997px;top:12.5px;width:7.2px;height:6.9px;background:#3c3c40"></div><div style="position:absolute;left:42px;top:12px;width:9px;height:24px;background:#1e1e20;border-radius:1px"></div><div style="position:absolute;left:52px;top:12px;width:6px;height:9px;background:#2a2a2a"></div><div style="position:absolute;left:59px;top:13px;width:6px;height:8px;background:#262222"></div><div style="position:absolute;left:66.5px;top:14px;width:1.5px;height:24px;background:#3a1e0e"></div><div style="position:absolute;left:69.5px;top:12.5px;width:8.5px;height:25.5px;background:#1a1a1c;border-radius:2px"></div><div style="position:absolute;left:56.80000000000001px;top:23.3px;width:8.2px;height:11.7px;background:#d06a40;border-radius:1px"></div><div style="position:absolute;left:58.5px;top:25px;width:4.8px;height:8px;background:#e8c8b8"></div><div style="position:absolute;left:44px;top:27px;width:12px;height:9px;background:#242426"></div><div style="position:absolute;left:8.299999999999997px;top:35.6px;width:17.7px;height:28.9px;background:linear-gradient(180deg,#6a5e54,#4e443a);border-radius:3px"></div><div style="position:absolute;left:0.5px;top:38px;width:10px;height:28px;border:2px solid #1c1616;border-right:none;border-radius:10px 0 0 10px;box-sizing:border-box"></div><div style="position:absolute;left:28px;top:36px;width:13.6px;height:16.7px;background:#1c1c1e;border-radius:2px"></div><div style="position:absolute;left:29px;top:53.7px;width:12px;height:8.8px;background:#c86a50;border-radius:1px"></div><div style="position:absolute;left:31px;top:55.5px;width:8px;height:5px;background:#e4c8bc"></div><div style="position:absolute;left:45.5px;top:38px;width:34.8px;height:55px;background:linear-gradient(170deg,#38383e,#222226 60%,#1c1c20);border-radius:6px 6px 4px 4px"></div><div style="position:absolute;left:53px;top:35px;width:18px;height:4px;border:1.5px solid #1a1a1c;border-bottom:none;border-radius:8px 8px 0 0;box-sizing:border-box"></div><div style="position:absolute;left:13px;top:67.4px;width:11.5px;height:18.6px;background:#1a1a1a;border-radius:2px"></div><div style="position:absolute;left:27px;top:68px;width:9.7px;height:17px;background:#181818;border-radius:4px"></div><div style="position:absolute;left:37.7px;top:69px;width:6.8px;height:13px;background:#1c1c1c;border-radius:3px"></div></div><div style="position:absolute;left:79px;top:4.5px;width:4px;height:1px;background:#f0e8e0;box-shadow:0 2px 0 #f0e8e0"></div></div>
<div style="position:absolute;left:44.5px;top:619.6px;width:7px;height:3px;background:#f4ecff;border-radius:1px"></div>
<div style="position:absolute;left:45.5px;top:706.1px;width:4px;height:2px;background:#9a80ff"></div>
<div style="position:absolute;left:61.5px;top:625.1px;width:42px;height:42px;background:radial-gradient(circle,#050505 0 35%,#202024 45%,#0c0c0e 70%);border-radius:50%"></div>
<div style="position:absolute;left:64.5px;top:676.7px;width:1px;height:27.4px;background:#e85a8a"></div>
<div style="position:absolute;left:66.5px;top:677.1px;width:18px;height:4px;background:#9a7af8;border-radius:1px"></div>
<div style="position:absolute;left:66.80px;top:684.48px;font-size:9px;line-height:9px;letter-spacing:0.663px;color:#fff;font-weight:700;white-space:nowrap;">Camera</div>
<div style="position:absolute;left:66.80px;top:692.28px;font-size:9px;line-height:9px;letter-spacing:-0.251px;color:#fff;font-weight:700;white-space:nowrap;">Lens</div>
<div style="position:absolute;left:66.5px;top:703.6px;width:26px;height:1px;background:rgba(220,210,255,.45)"></div>
<div style="position:absolute;left:12.77px;top:797.11px;font-size:17px;line-height:17px;letter-spacing:0.000px;color:#e8e8e8;font-weight:400;white-space:nowrap;-webkit-text-stroke:0">9</div>
<div style="position:absolute;left:37px;top:798.3px;width:179.7px;height:104.7px;box-sizing:border-box;border:3.3px solid #e08a80;border-radius:7px;background:#e08a80"></div>
<div style="position:absolute;left:40.5px;top:801.5px;width:173px;height:98.3px;border-radius:4px;background:linear-gradient(180deg,#6430f6,#5a24ec 40%,#4210dc)"></div>
<div style="position:absolute;left:46px;top:806px;width:6.5px;height:3px;background:#f0eaff;border-radius:1px"></div>
<div style="position:absolute;left:206.5px;top:806px;width:4.5px;height:3px;background:#f0eaff"></div>
<div style="position:absolute;left:45px;top:894.5px;width:3px;height:1.5px;background:#c0b0ff"></div>
<div style="position:absolute;left:203px;top:894.5px;width:6px;height:1px;background:#8a70f0"></div>
<div style="position:absolute;left:318px;top:219px;width:1462px;height:822px;background:linear-gradient(180deg,#6429f4 0%,#5d25f0 25%,#5320ea 50%,#4714e2 75%,#400fdc 100%)"></div>
<div style="position:absolute;left:318px;top:219px;width:656px;height:730px;background:linear-gradient(180deg,#bd8479 0%,#b97e78 40%,#b07571 100%)"></div>
<div style="position:absolute;left:318px;top:219px;width:656px;height:730px;background:radial-gradient(ellipse 95px 85px at 62px 45px,rgba(210,160,120,.55),rgba(210,160,120,.2) 50%,rgba(210,160,120,0) 100%)"></div>
<div style="position:absolute;left:318px;top:218px;width:1462px;height:824px;box-sizing:border-box;border:1px solid #8e76d8;pointer-events:none"></div>
<div style="position:absolute;left:318px;top:218px;width:1px;height:732px;background:#a09a9a"></div>
<svg style="position:absolute;left:350px;top:249px;overflow:visible;" width="60" height="34" viewBox="0 0 60 34" fill="none"><g fill="#f8d47c"><path fill-rule="evenodd" d="M10.5 1.2a8.6 8.6 0 1 1 0 17.2a8.6 8.6 0 1 1 0-17.2zM10.5 6.4a3.2 3.2 0 1 0 0 6.8a3.2 3.2 0 1 0 0-6.8z"/><path d="M16 1.4h6.5l7 9.5V1.4h6.3v16.9h-6.3l-7-9.5v9.5H17.2z"/><path d="M37.5 1.4h20.3v5.2H43.5v-.1zM37.5 7.4h19.5v4.3H37.5zM37.5 12.6h20.2v5.7H37.5z"/></g></svg>
<div style="position:absolute;left:353.50px;top:267.13px;font-size:15.8px;line-height:15.8px;letter-spacing:1.174px;color:#f8d47c;font-weight:700;white-space:nowrap;font-style:italic;-webkit-text-stroke:0.9px #f8d47c">SKILL</div>
<div style="position:absolute;left:1717.5px;top:251px;width:32.5px;height:4px;background:#ffffff;border-radius:2px"></div>
<div style="position:absolute;left:1717.5px;top:260.5px;width:32.5px;height:4px;background:#ffffff;border-radius:2px"></div>
<div style="position:absolute;left:1717.5px;top:270px;width:32.5px;height:4px;background:#ffffff;border-radius:2px"></div>
<div style="position:absolute;left:352.3px;top:992px;width:22.7px;height:21.7px;background:#8e72f2;border-radius:3.5px;box-shadow:0 0 10px 2px rgba(120,90,255,.35)"></div>
<div style="position:absolute;left:359.57px;top:995.73px;font-size:14.5px;line-height:14.5px;letter-spacing:0.000px;color:#ffffff;font-weight:700;white-space:nowrap;">9</div>
<div style="position:absolute;left:1707.40px;top:995.08px;font-size:15.5px;line-height:15.5px;letter-spacing:1.430px;color:#e4dcff;font-weight:400;white-space:nowrap;-webkit-text-stroke:0">2023</div>
<svg style="position:absolute;left:0px;top:0px;overflow:visible;" width="1920" height="1080" viewBox="0 0 1920 1080" fill="none"><path d="M1049 201V1048" stroke="#c8bcff" stroke-opacity=".75" stroke-width="1" stroke-dasharray="2 2.5"/><path d="M241 631.5H318M974 631.5H1855" stroke="#c0c0c0" stroke-opacity=".75" stroke-width="1" stroke-dasharray="2 2.5"/></svg>
<svg style="position:absolute;left:976px;top:952px;overflow:visible;" width="23" height="23" viewBox="0 0 23 23" fill="none"><path d="M11.5 1v22M0.5 11.5h23" stroke="#202020" stroke-width="3.2" stroke-opacity=".6"/><path d="M11.5 1.5v21M1 11.5h22" stroke="#f4f4e8" stroke-width="1.8"/><rect x="10.6" y="10.6" width="1.8" height="1.8" fill="#b8e040"/></svg>
<svg style="position:absolute;left:1859px;top:205px;overflow:visible;" width="11" height="9" viewBox="0 0 11 9" fill="none"><path d="M5.5 0.5L10.5 8.5H0.5z" fill="#9a9a9a"/></svg>
<div style="position:absolute;left:1859.5px;top:899.5px;width:9.5px;height:72.5px;background:#8e8e8e;border-radius:5px"></div>
<svg style="position:absolute;left:1859px;top:978px;overflow:visible;" width="11" height="8" viewBox="0 0 11 8" fill="none"><path d="M0.5 0.5h10L5.5 7.5z" fill="#9a9a9a"/></svg>
<svg style="position:absolute;left:1859px;top:994px;overflow:visible;" width="11" height="14" viewBox="0 0 11 14" fill="none"><path d="M5.5 0.5L10.5 6.5H0.5zM5.5 6L10.5 13H0.5z" fill="#9a9a9a"/></svg>
<svg style="position:absolute;left:1859px;top:1012px;overflow:visible;" width="11" height="15" viewBox="0 0 11 15" fill="none"><path d="M0.5 0.5h10L5.5 7zM0.5 7h10L5.5 14z" fill="#9a9a9a"/></svg>
<svg style="position:absolute;left:1886px;top:210px;overflow:visible;" width="24" height="24" viewBox="0 0 24 24" fill="none"><rect x="8" y="2.4" width="13" height="10.8" fill="#f0a030"/><rect x="2.2" y="11" width="10" height="10.3" fill="#121212" stroke="#c8c8c8" stroke-width="1.4"/><path d="M12.2 7.6l8.6 8.3-3.6.4 2.2 4.3-1.7.9-2.2-4.4-3.1 2.6z" fill="#121212" stroke="#d8d8d8" stroke-width="1.2" stroke-linejoin="round"/></svg>
<svg style="position:absolute;left:1886px;top:254px;overflow:visible;" width="24" height="26" viewBox="0 0 24 26" fill="none"><path d="M1.8 11.5L7.5 6L14 12.5L8.3 18z" stroke="#d0d0d0" stroke-width="1.4" stroke-linejoin="round"/><path d="M8.2 6.5V3.4a1.2 1.2 0 0 1 2.4 0V8.2" stroke="#d0d0d0" stroke-width="1.3"/><path d="M12.3 9c.8-1.2 2.6-1 2.8.6" stroke="#4a9ae8" stroke-width="1.5"/><path d="M21.4 10.3L12 19.8" stroke="#d0d0d0" stroke-width="1.6"/><path d="M12.3 19.5c-1.6 2.1-3.7 3.4-6.5 3.5 1.6-1.3 3-3 4.3-4.6z" fill="#2a7ad8"/></svg>
<div style="position:absolute;left:7.50px;top:1061.00px;font-size:13px;line-height:13px;letter-spacing:-0.639px;color:#dcdcdc;font-weight:400;white-space:nowrap;">Click and drag to insert an AutoShape.</div>
<svg style="position:absolute;left:1439px;top:1058px;overflow:visible;" width="21" height="19" viewBox="0 0 21 19" fill="none"><path d="M6 5l4-3.5L14 5" stroke="#d8d8d8" stroke-width="1.2"/><path d="M1.5 9h18M1.5 13h18M1.5 17h18" stroke="#d8d8d8" stroke-width="1.3"/></svg>
<div style="position:absolute;left:1460.70px;top:1061.00px;font-size:13px;line-height:13px;letter-spacing:-0.892px;color:#e0e0e0;font-weight:400;white-space:nowrap;">Notes</div>
<div style="position:absolute;left:1511px;top:1055.5px;width:45px;height:24.5px;background:#1e1e1e"></div>
<svg style="position:absolute;left:1524px;top:1058px;overflow:visible;" width="20" height="18" viewBox="0 0 20 18" fill="none"><rect x="1" y="1.5" width="18" height="15" stroke="#d8d8d8" stroke-width="1.3"/><rect x="5" y="4.5" width="10.5" height="6.5" stroke="#d8d8d8" stroke-width="1.3"/><path d="M4 13.5h12" stroke="#d8d8d8" stroke-width="1.3"/></svg>
<svg style="position:absolute;left:1569px;top:1058px;overflow:visible;" width="19" height="18" viewBox="0 0 19 18" fill="none"><rect x="1" y="1.5" width="7" height="6.5" stroke="#d8d8d8" stroke-width="1.3"/><rect x="11" y="1.5" width="7" height="6.5" stroke="#d8d8d8" stroke-width="1.3"/><rect x="1" y="10.5" width="7" height="6.5" stroke="#d8d8d8" stroke-width="1.3"/><rect x="11" y="10.5" width="7" height="6.5" stroke="#d8d8d8" stroke-width="1.3"/></svg>
<svg style="position:absolute;left:1614px;top:1058px;overflow:visible;" width="19" height="18" viewBox="0 0 19 18" fill="none"><path d="M1 2.5c3-1 6-1 8.5 1 2.5-2 5.5-2 8.5-1V16c-3-1-6-1-8.5 1-2.5-2-5.5-2-8.5-1z M9.5 3.5V17" stroke="#d8d8d8" stroke-width="1.3" stroke-linejoin="round"/><path d="M3 6h4.5M3 9h4.5M3 12h4.5M11.5 6H16M11.5 9H16M11.5 12H16" stroke="#d8d8d8" stroke-width="1"/></svg>
<svg style="position:absolute;left:1659px;top:1057px;overflow:visible;" width="19" height="20" viewBox="0 0 19 20" fill="none"><rect x="2" y="1.5" width="15" height="9.5" stroke="#d8d8d8" stroke-width="1.3"/><path d="M6.5 5h6" stroke="#d8d8d8" stroke-width="1.5"/><path d="M9.5 11v7M5.5 18.5h8" stroke="#d8d8d8" stroke-width="1.3"/></svg>
<div style="position:absolute;left:1697px;top:1067.5px;width:9px;height:1.2px;background:#888"></div>
<div style="position:absolute;left:1712px;top:1067px;width:111px;height:1.6px;background:#a8a8a8"></div>
<div style="position:absolute;left:1765px;top:1060.5px;width:7px;height:13px;background:#9e9e9e;border-radius:1px"></div>
<svg style="position:absolute;left:1827px;top:1061px;overflow:visible;" width="12" height="12" viewBox="0 0 12 12" fill="none"><path d="M6 0.5v11M0.5 6h11" stroke="#d8d8d8" stroke-width="1.2"/></svg>
<div style="position:absolute;left:1852.40px;top:1061.00px;font-size:13px;line-height:13px;letter-spacing:-0.892px;color:#e0e0e0;font-weight:400;white-space:nowrap;">102 %</div>
<svg style="position:absolute;left:1897px;top:1058px;overflow:visible;" width="19" height="19" viewBox="0 0 19 19" fill="none"><rect x="6" y="6" width="7" height="7" stroke="#d8d8d8" stroke-width="1.3"/><path d="M7 3.5L9.5 1 12 3.5M7 15.5L9.5 18 12 15.5M3.5 7L1 9.5 3.5 12M15.5 7L18 9.5 15.5 12" stroke="#d8d8d8" stroke-width="1.2"/></svg>
</div></body></html>
